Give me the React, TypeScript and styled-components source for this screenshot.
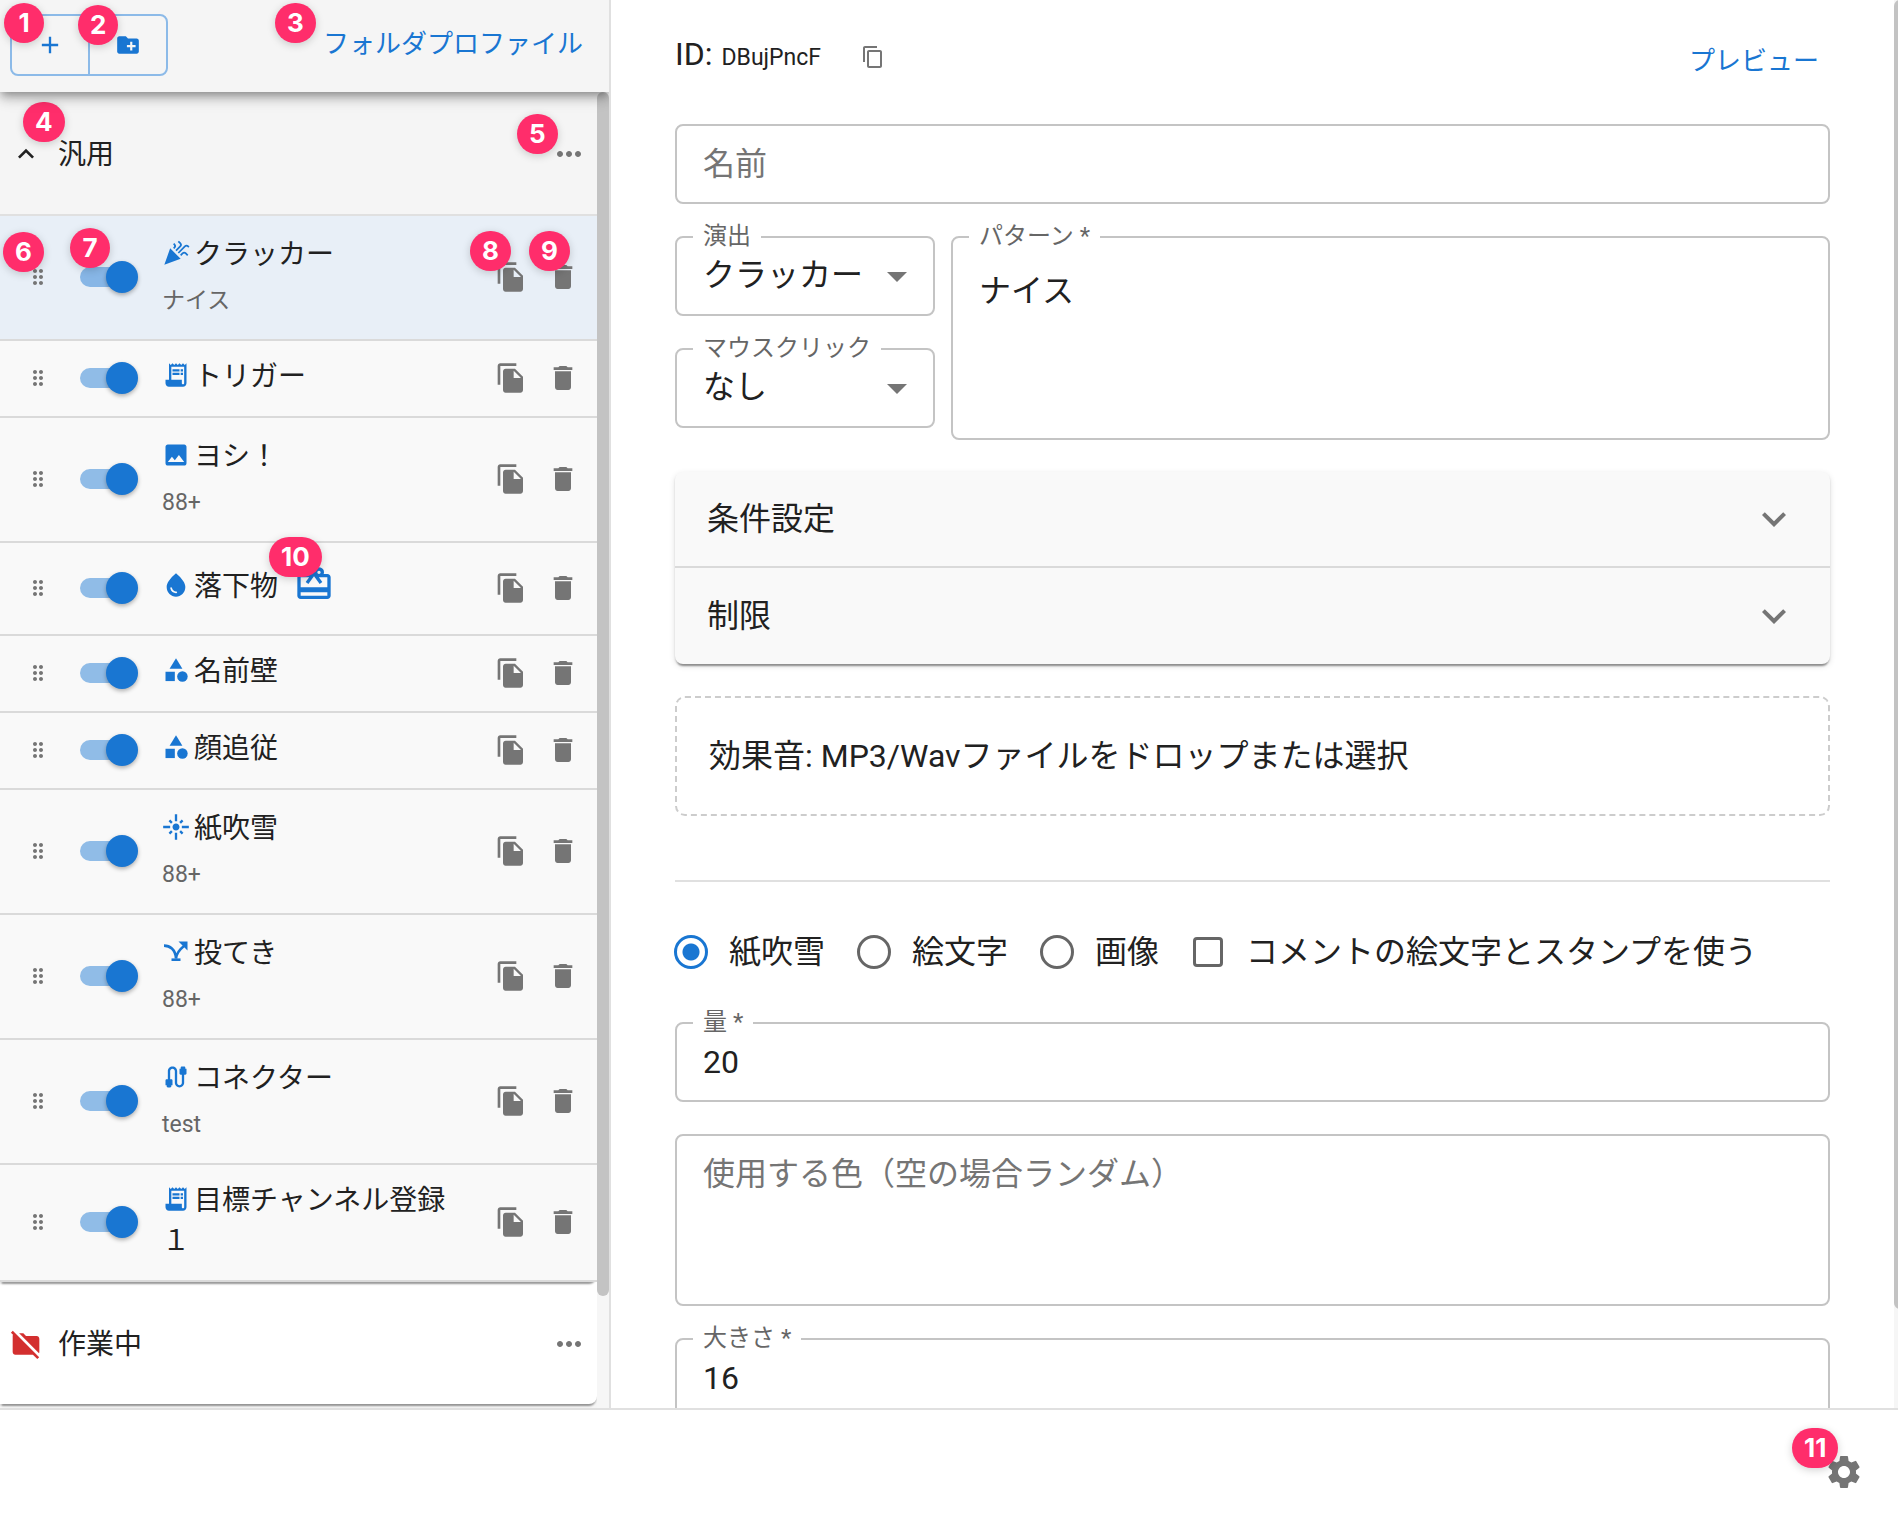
import React from "react";
import styled, { createGlobalStyle, css } from "styled-components";
import {
  MdAdd,
  MdArrowDropDown,
  MdCable,
  MdCardGiftcard,
  MdCategory,
  MdCelebration,
  MdContentCopy,
  MdCreateNewFolder,
  MdDelete,
  MdDragIndicator,
  MdExpandLess,
  MdExpandMore,
  MdFileCopy,
  MdFlare,
  MdFolderOff,
  MdImage,
  MdMoreHoriz,
  MdReceiptLong,
  MdSettings,
  MdWaterDrop,
} from "react-icons/md";

const color = {
  primary: "#1976d2",
  text: "#212121",
  muted: "#666666",
  icon: "#757575",
  outline: "#c4c4c4",
  divider: "#dadada",
  danger: "#d32f2f",
  marker: "#ff2d6b",
};

const GlobalStyle = createGlobalStyle`
  *, *::before, *::after { box-sizing: border-box; }
  body {
    margin: 0;
    background: #fff;
    color: ${color.text};
    font-family: Roboto, "Noto Sans CJK JP", sans-serif;
    font-size: 32px;
    line-height: 46px;
  }
  button, input, select, textarea { font: inherit; color: inherit; }
  svg { display: block; flex: none; }
`;

const Shell = styled.div`
  display: grid;
  grid-template-rows: minmax(0, 1fr) auto;
  height: 100vh;
`;

const Workspace = styled.div`
  display: grid;
  grid-template-columns: 611px minmax(0, 1fr);
  min-height: 0;
`;

const Marker = styled.span<{ $x: number; $y: number }>`
  position: absolute;
  z-index: 3;
  left: ${(p) => p.$x}px;
  top: ${(p) => p.$y}px;
  min-width: 40px;
  height: 40px;
  padding: 0 12px;
  border-radius: 20px;
  background: ${color.marker};
  box-shadow: 0 2px 8px rgba(0, 0, 0, 0.18);
  color: #fff;
  font: 700 26px/40px Inter, sans-serif;
  text-align: center;
`;

/* ---------- sidebar ---------- */

const Sidebar = styled.aside`
  display: flex;
  flex-direction: column;
  min-height: 0;
  overflow: hidden;
  border-right: 2px solid #e0e0e0;
  background: #f5f5f5;
`;

const SidebarHeader = styled.header`
  position: relative;
  z-index: 2;
  display: flex;
  align-items: flex-start;
  justify-content: space-between;
  height: 92px;
  padding: 14px 26px 0 10px;
  background: #f5f5f5;
  box-shadow: 0 4px 8px -2px rgba(0, 0, 0, 0.3), 0 8px 10px rgba(0, 0, 0, 0.14),
    0 2px 20px rgba(0, 0, 0, 0.12);
`;

const ButtonGroup = styled.div`
  display: flex;
  border: 2px solid #8cbae8;
  border-radius: 8px;
`;

const GroupButton = styled.button`
  position: relative;
  display: grid;
  place-items: center;
  width: 76px;
  height: 58px;
  padding: 0;
  border: 0;
  background: none;
  color: ${color.primary};
  & + & {
    width: 78px;
    border-left: 2px solid #8cbae8;
  }
`;

const TextButton = styled.button`
  position: relative;
  padding: 14px 0 6px;
  border: 0;
  background: none;
  color: ${color.primary};
  font-size: 26px;
  line-height: 32px;
`;

const SidebarBody = styled.div`
  display: flex;
  flex: 1;
  min-height: 0;
`;

const FolderList = styled.div`
  flex: 1;
  min-width: 0;
  overflow: hidden;
`;

const ScrollTrack = styled.div<{ $width: number }>`
  flex: none;
  width: ${(p) => p.$width}px;
  overflow: hidden;
  background: #f6f6f6;
`;

const ScrollThumb = styled.div<{ $size: number; $width: number }>`
  width: ${(p) => p.$width}px;
  height: ${(p) => p.$size}%;
  border-radius: 6px;
  background: #c3c3c3;
`;

const Folder = styled.section<{ $open?: boolean }>`
  position: relative;
  z-index: ${(p) => (p.$open ? 1 : 0)};
  border-radius: 0 0 8px 0;
  background: ${(p) => (p.$open ? "#f5f5f5" : "#fff")};
  box-shadow: 0 4px 2px -2px rgba(0, 0, 0, 0.3), 0 2px 2px rgba(0, 0, 0, 0.14);
`;

const FolderHeader = styled.div<{ $divided?: boolean }>`
  position: relative;
  display: flex;
  align-items: center;
  height: ${(p) => (p.$divided ? 124 : 122)}px;
  padding: 2px 10px 0;
  ${(p) =>
    p.$divided &&
    css`
      border-bottom: 2px solid #e0e0e0;
    `}
`;

const FolderName = styled.h2`
  flex: 1;
  margin: 0 0 0 16px;
  padding-top: 2px;
  font-size: 28px;
  font-weight: 400;
  line-height: 40px;
`;

const IconButton = styled.button`
  position: relative;
  display: inline-flex;
  padding: 0;
  border: 0;
  background: none;
  color: ${color.icon};
`;

const ToggleButton = styled(IconButton)<{ $danger?: boolean }>`
  color: ${(p) => (p.$danger ? color.danger : color.text)};
`;

const ItemList = styled.ul`
  margin: 0;
  padding: 0;
  list-style: none;
`;

const Item = styled.li<{ $selected?: boolean }>`
  display: flex;
  align-items: center;
  padding: 0 18px 2px 26px;
  border-bottom: 2px solid ${color.divider};
  background: ${(p) => (p.$selected ? "#e8eff7" : "#f9f9f9")};
`;

const Handle = styled.span`
  position: relative;
  margin-right: 16px;
  color: ${color.icon};
`;

const SwitchBox = styled.span`
  position: relative;
  display: block;
  width: 80px;
  height: 48px;
`;

const SwitchInput = styled.input`
  appearance: none;
  position: relative;
  display: block;
  width: 80px;
  height: 48px;
  margin: 0;
  &::before {
    content: "";
    position: absolute;
    inset: 14px;
    border-radius: 10px;
    background: rgba(25, 118, 210, 0.47);
  }
  &::after {
    content: "";
    position: absolute;
    top: 8px;
    left: 8px;
    width: 32px;
    height: 32px;
    border-radius: 50%;
    background: #fff;
    box-shadow: 0 2px 4px rgba(0, 0, 0, 0.3);
  }
  &:checked::after {
    left: 40px;
    background: ${color.primary};
  }
`;

const ItemText = styled.div<{ $two: boolean }>`
  flex: 1;
  min-width: 0;
  margin: 0 24px 0 16px;
  padding: ${(p) => (p.$two ? "19px 0 16px" : "16px 0 17px")};
`;

const ItemName = styled.div<{ $tall?: boolean }>`
  font-size: 28px;
  line-height: ${(p) => (p.$tall ? 56 : 40)}px;
`;

const Glyph = styled.span`
  display: inline-block;
  margin-right: 4px;
  color: ${color.primary};
  line-height: 1;
  vertical-align: -3px;
`;

const Reward = styled.span`
  position: relative;
  display: inline-block;
  margin-left: 16px;
  color: ${color.primary};
  line-height: 1;
  vertical-align: -8px;
`;

const ItemNote = styled.div`
  padding-top: 6px;
  color: ${color.muted};
  font-size: 23px;
  line-height: 40px;
`;

const ItemActions = styled.div`
  display: flex;
  gap: 20px;
`;

function ThrowIcon() {
  return (
    <svg width="28" height="28" viewBox="0 0 28 28" fill="none" stroke="currentColor" strokeWidth="2.6">
      <path d="M2 7.6C7.500 7.600 13.500 11 14 20.500C14.500 15.500 17 12 22 8" />
      <path d="M9.500 21.700h9" />
      <path d="M16.500 3.500h9v9z" fill="currentColor" stroke="none" />
    </svg>
  );
}

type Entry = {
  name: string;
  icon: React.ReactNode;
  note?: string;
  reward?: boolean;
};

const entries: Entry[] = [
  { name: "クラッカー", icon: <MdCelebration size={28} />, note: "ナイス" },
  { name: "トリガー", icon: <MdReceiptLong size={28} /> },
  { name: "ヨシ！", icon: <MdImage size={28} />, note: "88+" },
  { name: "落下物", icon: <MdWaterDrop size={28} />, reward: true },
  { name: "名前壁", icon: <MdCategory size={28} /> },
  { name: "顔追従", icon: <MdCategory size={28} /> },
  { name: "紙吹雪", icon: <MdFlare size={28} />, note: "88+" },
  { name: "投てき", icon: <ThrowIcon />, note: "88+" },
  { name: "コネクター", icon: <MdCable size={28} />, note: "test" },
  { name: "目標チャンネル登録１", icon: <MdReceiptLong size={28} /> },
];

function EntryRow({ entry, selected }: { entry: Entry; selected: boolean }) {
  return (
    <Item $selected={selected}>
      <Handle>
        <MdDragIndicator size={24} />
        {selected && <Marker $x={-23} $y={-33}>6</Marker>}
      </Handle>
      <SwitchBox>
        <SwitchInput type="checkbox" role="switch" defaultChecked aria-label={entry.name} />
        {selected && <Marker $x={4} $y={-25}>7</Marker>}
      </SwitchBox>
      <ItemText $two={Boolean(entry.note)}>
        <ItemName $tall={entry.reward}>
          <Glyph>{entry.icon}</Glyph>
          {entry.name}
          {entry.reward && (
            <Reward>
              <MdCardGiftcard size={40} />
              <Marker $x={-25} $y={-27}>10</Marker>
            </Reward>
          )}
        </ItemName>
        {entry.note && <ItemNote>{entry.note}</ItemNote>}
      </ItemText>
      <ItemActions>
        <IconButton type="button" aria-label="複製">
          <MdFileCopy size={32} />
          {selected && <Marker $x={-25} $y={-30}>8</Marker>}
        </IconButton>
        <IconButton type="button" aria-label="削除">
          <MdDelete size={32} />
          {selected && <Marker $x={-18} $y={-30}>9</Marker>}
        </IconButton>
      </ItemActions>
    </Item>
  );
}

/* ---------- editor ---------- */

const EditorPane = styled.div`
  display: flex;
  min-width: 0;
  min-height: 0;
`;

const Editor = styled.main`
  display: flex;
  flex: 1;
  flex-direction: column;
  gap: 32px;
  min-width: 0;
  padding: 31px 64px 0;
  overflow: hidden;
  & > * {
    flex: none;
  }
`;

const EditorHeader = styled.div`
  display: flex;
  align-items: flex-start;
  justify-content: space-between;
  height: 61px;
`;

const Identity = styled.div`
  display: flex;
  align-items: baseline;
`;

const IdValue = styled.span`
  margin: 0 40px 0 9px;
  font-size: 23px;
`;

const CopyIdButton = styled(IconButton)`
  align-self: flex-start;
  margin-top: 14px;
`;

const PreviewButton = styled(TextButton)`
  margin-right: 11px;
`;

const FieldBox = styled.div`
  position: relative;
  display: flex;
  min-width: 0;
`;

const FieldLabel = styled.label`
  position: absolute;
  top: -18px;
  left: 18px;
  padding: 0 10px;
  background: #fff;
  color: ${color.muted};
  font-size: 24px;
  line-height: 36px;
`;

const control = css`
  display: block;
  width: 100%;
  margin: 0;
  border: 2px solid ${color.outline};
  border-radius: 8px;
  background: none;
  outline: 0;
  &::placeholder {
    color: ${color.icon};
    opacity: 1;
  }
`;

const TextInput = styled.input`
  ${control}
  height: 80px;
  padding: 0 26px;
`;

const TextArea = styled.textarea<{ $height: number; $pad: number }>`
  ${control}
  height: ${(p) => p.$height}px;
  padding: ${(p) => p.$pad}px 26px 0;
  resize: none;
`;

const SelectInput = styled.select`
  ${control}
  appearance: none;
  height: 80px;
  padding: 0 64px 2px 26px;
`;

const SelectArrow = styled.span`
  position: absolute;
  top: 16px;
  right: 14px;
  color: ${color.icon};
  pointer-events: none;
`;

const PatternGrid = styled.div`
  display: grid;
  grid-template-columns: 260px minmax(0, 1fr);
  gap: 16px;
`;

const SelectStack = styled.div`
  display: flex;
  flex-direction: column;
  gap: 32px;
`;

const Accordion = styled.div`
  border-radius: 8px;
  background: #f9f9f9;
  box-shadow: 0 4px 2px -2px rgba(0, 0, 0, 0.3), 0 2px 2px rgba(0, 0, 0, 0.14),
    0 2px 6px rgba(0, 0, 0, 0.12);
`;

const AccordionButton = styled.button`
  display: flex;
  align-items: center;
  justify-content: space-between;
  width: 100%;
  height: 96px;
  padding: 0 32px;
  border: 0;
  background: none;
  text-align: left;
  &:not(:last-child) {
    border-bottom: 2px solid ${color.divider};
  }
  svg {
    color: ${color.icon};
  }
`;

const DropZone = styled.button`
  display: flex;
  align-items: center;
  height: 120px;
  padding: 0 32px;
  border: 2px dashed #cccccc;
  border-radius: 10px;
  background: none;
  text-align: left;
`;

const Divider = styled.hr`
  width: 100%;
  height: 2px;
  margin: 32px 0 0;
  border: 0;
  background: #e0e0e0;
`;

const Options = styled.div`
  display: flex;
  align-items: center;
  gap: 29px;
  height: 76px;
  margin: 0 0 0 -4px;
`;

const Option = styled.label`
  display: flex;
  align-items: center;
  gap: 18px;
  white-space: nowrap;
`;

const Radio = styled.input`
  appearance: none;
  flex: none;
  width: 34px;
  height: 34px;
  margin: 3px;
  border: 3px solid ${color.muted};
  border-radius: 50%;
  &:checked {
    border-color: ${color.primary};
    background: radial-gradient(circle, ${color.primary} 8px, transparent 9px);
  }
`;

const Checkbox = styled.input`
  appearance: none;
  flex: none;
  width: 30px;
  height: 30px;
  margin: 5px;
  border: 3px solid ${color.muted};
  border-radius: 4px;
`;

const Footer = styled.footer`
  display: flex;
  align-items: center;
  justify-content: flex-end;
  height: 108px;
  padding: 18px 34px 0 0;
  border-top: 2px solid #e0e0e0;
`;

const media = ["紙吹雪", "絵文字", "画像"];

export default function App() {
  return (
    <>
      <GlobalStyle />
      <Shell lang="ja">
        <Workspace>
          <Sidebar>
            <SidebarHeader>
              <ButtonGroup>
                <GroupButton type="button" aria-label="追加">
                  <MdAdd size={28} />
                  <Marker $x={-8} $y={-13}>1</Marker>
                </GroupButton>
                <GroupButton type="button" aria-label="フォルダを追加">
                  <MdCreateNewFolder size={26} />
                  <Marker $x={-12} $y={-11}>2</Marker>
                </GroupButton>
              </ButtonGroup>
              <TextButton type="button">
                フォルダプロファイル
                <Marker $x={-48} $y={-11}>3</Marker>
              </TextButton>
            </SidebarHeader>
            <SidebarBody>
              <FolderList>
                <Folder $open>
                  <FolderHeader $divided>
                    <ToggleButton type="button" aria-label="折りたたむ">
                      <MdExpandLess size={32} />
                    </ToggleButton>
                    <FolderName>汎用</FolderName>
                    <IconButton type="button" aria-label="メニュー">
                      <MdMoreHoriz size={36} />
                      <Marker $x={-34} $y={-22}>5</Marker>
                    </IconButton>
                    <Marker $x={23} $y={10}>4</Marker>
                  </FolderHeader>
                  <ItemList>
                    {entries.map((entry, i) => (
                      <EntryRow key={entry.name} entry={entry} selected={i === 0} />
                    ))}
                  </ItemList>
                </Folder>
                <Folder>
                  <FolderHeader>
                    <ToggleButton type="button" $danger aria-label="無効なフォルダ">
                      <MdFolderOff size={32} />
                    </ToggleButton>
                    <FolderName>作業中</FolderName>
                    <IconButton type="button" aria-label="メニュー">
                      <MdMoreHoriz size={36} />
                    </IconButton>
                  </FolderHeader>
                </Folder>
              </FolderList>
              <ScrollTrack $width={12}>
                <ScrollThumb $size={91.5} $width={12} />
              </ScrollTrack>
            </SidebarBody>
          </Sidebar>

          <EditorPane>
            <Editor>
              <EditorHeader>
                <Identity>
                  ID:
                  <IdValue>DBujPncF</IdValue>
                  <CopyIdButton type="button" aria-label="IDをコピー">
                    <MdContentCopy size={24} />
                  </CopyIdButton>
                </Identity>
                <PreviewButton type="button">プレビュー</PreviewButton>
              </EditorHeader>

              <FieldBox>
                <TextInput aria-label="名前" placeholder="名前" />
              </FieldBox>

              <PatternGrid>
                <SelectStack>
                  <FieldBox>
                    <SelectInput id="effect" defaultValue="クラッカー">
                      <option>クラッカー</option>
                    </SelectInput>
                    <FieldLabel htmlFor="effect">演出</FieldLabel>
                    <SelectArrow>
                      <MdArrowDropDown size={48} />
                    </SelectArrow>
                  </FieldBox>
                  <FieldBox>
                    <SelectInput id="click" defaultValue="なし">
                      <option>なし</option>
                    </SelectInput>
                    <FieldLabel htmlFor="click">マウスクリック</FieldLabel>
                    <SelectArrow>
                      <MdArrowDropDown size={48} />
                    </SelectArrow>
                  </FieldBox>
                </SelectStack>
                <FieldBox>
                  <TextArea id="pattern" $height={204} $pad={30} defaultValue="ナイス" />
                  <FieldLabel htmlFor="pattern">パターン *</FieldLabel>
                </FieldBox>
              </PatternGrid>

              <Accordion>
                <AccordionButton type="button">
                  条件設定
                  <MdExpandMore size={48} />
                </AccordionButton>
                <AccordionButton type="button">
                  制限
                  <MdExpandMore size={48} />
                </AccordionButton>
              </Accordion>

              <DropZone type="button">効果音: MP3/Wavファイルをドロップまたは選択</DropZone>

              <Divider />

              <Options>
                {media.map((label, i) => (
                  <Option key={label}>
                    <Radio type="radio" name="media" defaultChecked={i === 0} />
                    {label}
                  </Option>
                ))}
                <Option>
                  <Checkbox type="checkbox" />
                  コメントの絵文字とスタンプを使う
                </Option>
              </Options>

              <FieldBox>
                <TextInput id="amount" defaultValue="20" />
                <FieldLabel htmlFor="amount">量 *</FieldLabel>
              </FieldBox>

              <FieldBox>
                <TextArea
                  $height={172}
                  $pad={15}
                  aria-label="使用する色"
                  placeholder="使用する色（空の場合ランダム）"
                />
              </FieldBox>

              <FieldBox>
                <TextInput id="size" defaultValue="16" />
                <FieldLabel htmlFor="size">大きさ *</FieldLabel>
              </FieldBox>
            </Editor>
            <ScrollTrack $width={4}>
              <ScrollThumb $size={93} $width={12} />
            </ScrollTrack>
          </EditorPane>
        </Workspace>

        <Footer>
          <IconButton type="button" aria-label="設定">
            <MdSettings size={40} />
            <Marker $x={-32} $y={-24}>11</Marker>
          </IconButton>
        </Footer>
      </Shell>
    </>
  );
}
